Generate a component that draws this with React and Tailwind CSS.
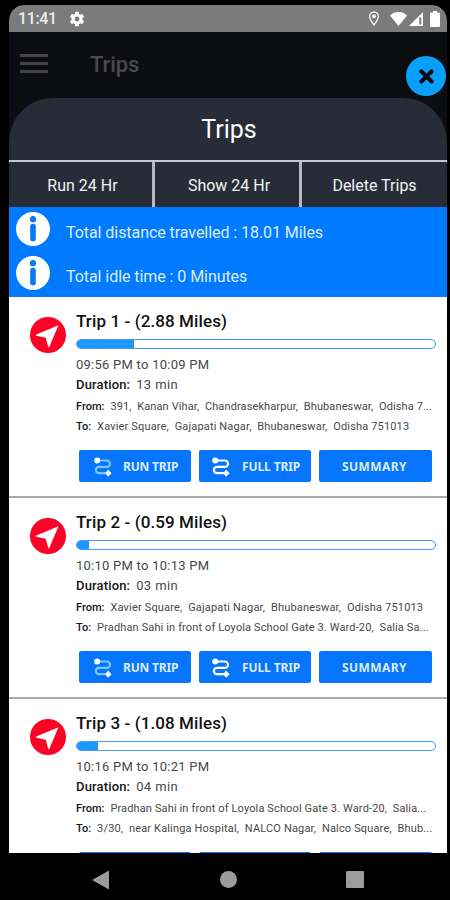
import React from "react";

const trips = [
  {
    title: "Trip 1 - (2.88 Miles)",
    progress: 57,
    time: "09:56 PM to 10:09 PM",
    duration: "13 min",
    from: "391,  Kanan Vihar,  Chandrasekharpur,  Bhubaneswar,  Odisha 7...",
    to: "Xavier Square,  Gajapati Nagar,  Bhubaneswar,  Odisha 751013",
    fromTrack: "tracking-[0.11px]",
    toTrack: "tracking-[0.16px]",
  },
  {
    title: "Trip 2 - (0.59 Miles)",
    progress: 12,
    time: "10:10 PM to 10:13 PM",
    duration: "03 min",
    from: "Xavier Square,  Gajapati Nagar,  Bhubaneswar,  Odisha 751013",
    to: "Pradhan Sahi in front of Loyola School Gate 3. Ward-20,  Salia Sa...",
    fromTrack: "tracking-[0.17px]",
    toTrack: "tracking-[0.13px]",
  },
  {
    title: "Trip 3 - (1.08 Miles)",
    progress: 21,
    time: "10:16 PM to 10:21 PM",
    duration: "04 min",
    from: "Pradhan Sahi in front of Loyola School Gate 3. Ward-20,  Salia...",
    to: "3/30,  near Kalinga Hospital,  NALCO Nagar,  Nalco Square,  Bhub...",
    fromTrack: "tracking-[0.13px]",
    toTrack: "tracking-[0.16px]",
  },
];

function InfoIcon() {
  return (
    <svg width="34" height="34" viewBox="0 0 34 34">
      <circle cx="17" cy="17" r="17" fill="#fff" />
      <circle cx="17" cy="7.2" r="3.1" fill="#0879f5" />
      <rect x="14.2" y="11.7" width="5.6" height="17.6" rx="2.6" fill="#0879f5" />
    </svg>
  );
}

function NavIcon() {
  return (
    <svg width="36" height="36" viewBox="0 0 36 36">
      <circle cx="18" cy="18" r="18" fill="#ff0027" />
      <path d="M28.5 8.3 6.2 17.6 Q5.2 18.2 6.4 18.8 L15.7 20.8 18.2 29.8 Q18.8 30.8 19.4 29.8 Z" fill="#fff" />
    </svg>
  );
}

function RouteIcon({ faded }) {
  return (
    <svg className="mt-px" width="18" height="20" viewBox="0 0 18 20" fill="none">
      <path
        d="M3 3.5H12.8a3.2 3.2 0 0 1 0 6.4H5a3.1 3.1 0 0 0 0 6.3H14"
        stroke={faded ? "#79c6fb" : "#fff"}
        strokeWidth="2.2"
      />
      <circle cx="3.2" cy="3.4" r="3" fill="#fff" />
      <path d="M14 12.600 17.6 16.2 14 19.8 11.4 16.2Z" fill="#fff" />
    </svg>
  );
}

function ActionButton({ icon, children, className }) {
  return (
    <div
      className={`flex h-8 items-center rounded-[2px] bg-[#0675fb] font-['Noto_Sans',sans-serif] text-xs font-bold text-[#d9ecff] ${className}`}
    >
      {icon}
      <span className="pt-[2px] whitespace-nowrap">{children}</span>
    </div>
  );
}

function TripCard({ trip }) {
  return (
    <div className="flex h-[201px] shrink-0 border-b-2 border-[#a9a9a9] pl-[21px]">
      <div className="w-[46px] shrink-0 pt-5">
        <NavIcon />
      </div>
      <div className="flex flex-col whitespace-pre text-[#484848]">
        <div className="mt-[13px] h-[22px] text-[17px] leading-[22px] font-medium text-[#111]">
          <span className="tracking-[0.1px]">{trip.title}</span>
        </div>
        <div className="mt-[7px] h-[10px] w-[360px] overflow-hidden rounded-full border border-[#4a96f3] bg-white">
          <div className="h-full bg-[#1c97fb]" style={{ width: trip.progress }} />
        </div>
        <div className="mt-[6px] h-5 text-[13px] leading-5 tracking-[0.25px]">{trip.time}</div>
        <div className="flex h-5 gap-[6px] text-[13px] leading-5">
          <span className="font-medium tracking-[0.15px] text-[#161616]">Duration:</span>
          <span className="tracking-[0.4px]">{trip.duration}</span>
        </div>
        <div className="mt-[2px] flex h-5 gap-[6px] text-[11px] leading-5">
          <span className="font-medium text-[#161616]">From:</span>
          <span className={trip.fromTrack}>{trip.from}</span>
        </div>
        <div className="flex h-5 gap-[6px] text-[11px] leading-5">
          <span className="font-medium text-[#161616]">To:</span>
          <span className={trip.toTrack}>{trip.to}</span>
        </div>
        <div className="mt-[13px] ml-[3px] flex gap-2">
          <ActionButton className="w-28 gap-[11px] pl-[15px] tracking-[-0.2px]" icon={<RouteIcon faded />}>
            RUN TRIP
          </ActionButton>
          <ActionButton className="w-28 gap-[12px] pl-[13px] tracking-[-0.1px]" icon={<RouteIcon />}>
            FULL TRIP
          </ActionButton>
          <ActionButton className="w-[113px] justify-center pr-[2px] tracking-[0.4px]">SUMMARY</ActionButton>
        </div>
      </div>
    </div>
  );
}

function StatusBar() {
  return (
    <div className="flex h-[27px] shrink-0 items-center rounded-t-[15px] bg-[#7b7b7b] pr-[7px] pl-[9px] text-white">
      <span className="pt-px text-base leading-none font-medium tracking-[-0.4px] text-[#eee]">11:41</span>
      <svg className="ml-[11px]" width="18" height="18" viewBox="0 0 24 24" fill="#fff">
        <path d="M19.14 12.94c.04-.3.06-.61.06-.94s-.02-.64-.07-.94l2.03-1.58a.49.49 0 0 0 .12-.61l-1.92-3.32a.49.49 0 0 0-.59-.22l-2.39.96c-.5-.38-1.03-.7-1.62-.94l-.36-2.54a.48.48 0 0 0-.48-.41h-3.84a.47.47 0 0 0-.47.41l-.36 2.54c-.59.24-1.13.57-1.62.94l-2.39-.96a.48.48 0 0 0-.59.22L2.74 8.87a.47.47 0 0 0 .12.61l2.03 1.58c-.05.3-.09.63-.09.94s.02.64.07.94l-2.03 1.58a.49.49 0 0 0-.12.61l1.92 3.32c.12.22.37.29.59.22l2.39-.96c.5.38 1.03.7 1.62.94l.36 2.54c.05.24.24.41.48.41h3.84c.24 0 .44-.17.47-.41l.36-2.54c.59-.24 1.13-.56 1.62-.94l2.39.96c.22.08.47 0 .59-.22l1.92-3.32a.47.47 0 0 0-.12-.61zM12 15.2a3.2 3.2 0 1 1 0-6.4 3.2 3.2 0 0 1 0 6.4" />
      </svg>
      <svg className="ml-auto" width="12" height="15" viewBox="0 0 12 16" fill="none" stroke="#fff">
        <path d="M6 14.8C3.2 11.2 1.3 8.4 1.3 5.8a4.7 4.7 0 0 1 9.4 0C10.7 8.4 8.8 11.2 6 14.8Z" strokeWidth="1.4" />
        <circle cx="6" cy="5.7" r="1.6" fill="#fff" />
      </svg>
      <svg className="ml-[10px]" width="17" height="14" viewBox="0 0 17 14" fill="#fff">
        <path d="M8.5 14 0 3.4C4.8-1.1 12.2-1.1 17 3.4Z" />
      </svg>
      <svg className="ml-[2px]" width="14" height="14" viewBox="0 0 14 14" fill="#fff">
        <path d="M14 0V14H0ZM10.3 5.6V12.4H12.3V5.6Z" fillRule="evenodd" />
      </svg>
      <svg className="ml-[7px]" width="10" height="16" viewBox="0 0 10 16" fill="#fff">
        <path d="M3 0h4v1.6h2a1 1 0 0 1 1 1V15a1 1 0 0 1-1 1H1a1 1 0 0 1-1-1V2.600a1 1 0 0 1 1-1h2Z" />
      </svg>
    </div>
  );
}

export default function App() {
  return (
    <div className="flex h-[900px] w-[450px] flex-col overflow-hidden bg-black pt-[5px] font-[Roboto,sans-serif]">
      <div className="relative mr-[3px] ml-[9px] flex h-[848px] shrink-0 flex-col overflow-hidden rounded-t-[15px] bg-[#0b0d11]">
        <StatusBar />
        <div className="flex h-[66px] shrink-0 items-center pb-[2px] pl-[11px]">
          <div className="flex w-7 flex-col gap-[5px] pb-px">
            <div className="h-[3px] bg-[#454546]" />
            <div className="h-[3px] bg-[#454546]" />
            <div className="h-[3px] bg-[#454546]" />
          </div>
          <span className="ml-[42px] text-[22px] font-medium tracking-[-0.1px] text-[#4a4a4b]">Trips</span>
        </div>
        <div className="absolute top-[51px] right-px flex h-10 w-10 items-center justify-center rounded-full bg-[#08a0fb]">
          <svg width="15" height="15" viewBox="0 0 14 14" stroke="#080c12" strokeWidth="3.8" strokeLinecap="round">
            <path d="M2.300 2.300 11.700 11.700M11.700 2.300 2.300 11.700" />
          </svg>
        </div>
        <div className="flex h-[62px] shrink-0 items-center justify-center rounded-t-[44px] bg-[#272c38] pt-[2px] pl-[2px] text-[25px] text-white">
          Trips
        </div>
        <div className="grid h-[47px] shrink-0 grid-cols-[143px_144px_1fr] gap-[3px] border-t-2 border-[#c9c7d2] bg-[#b9b8c2] text-base text-[#f2f2f4]">
          <div className="flex items-center justify-center bg-[#272c38] pt-[3px] pl-1">Run 24 Hr</div>
          <div className="flex items-center justify-center bg-[#272c38] pt-[3px] pl-1">Show 24 Hr</div>
          <div className="flex items-center justify-center bg-[#272c38] pt-[3px]">Delete Trips</div>
        </div>
        <div className="flex h-[90px] shrink-0 flex-col gap-[10px] bg-[#007aff] pt-[5px] pl-[6.5px] text-base tracking-[-0.06px] text-[#dcecff]">
          <div className="flex h-[34px] gap-[16.5px]">
            <InfoIcon />
            <span className="pt-[9px] leading-6">Total distance travelled : 18.01 Miles</span>
          </div>
          <div className="flex h-[34px] gap-[16.5px]">
            <InfoIcon />
            <span className="pt-[9px] leading-6">Total idle time : 0 Minutes</span>
          </div>
        </div>
        <div className="flex min-h-0 flex-1 flex-col overflow-hidden bg-white">
          {trips.map((trip) => (
            <TripCard key={trip.title} trip={trip} />
          ))}
        </div>
      </div>
      <div className="flex h-[53px] items-center pt-[6px] pl-[92px]">
        <svg width="17" height="20" viewBox="0 0 17 20">
          <path d="M17 0.500V19.500L0 10Z" fill="#9c9c9c" />
        </svg>
        <div className="ml-[111px] h-[17px] w-[17px] rounded-full bg-[#9c9c9c]" />
        <div className="ml-[109px] h-[17px] w-[18px] rounded-[1px] bg-[#9c9c9c]" />
      </div>
    </div>
  );
}
